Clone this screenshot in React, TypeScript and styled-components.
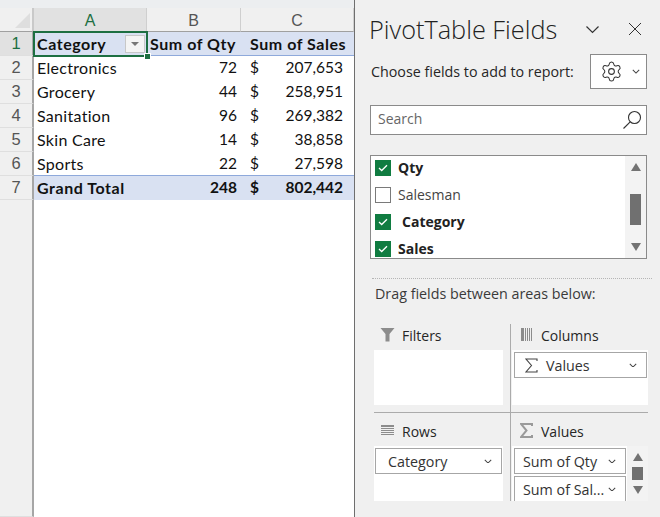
import React from "react";
import styled, { createGlobalStyle } from "styled-components";
import { Settings } from "lucide-react";

const Global = createGlobalStyle`
  html, body { margin: 0; padding: 0; background: #fff; }
  #root { width: 660px; height: 517px; overflow: hidden; }
`;

const Page = styled.div`
  display: flex;
  width: 660px;
  height: 517px;
  overflow: hidden;
  font-family: "Open Sans", "Noto Sans", sans-serif;
`;

/* ---------- sheet ---------- */
const Sheet = styled.div`
  width: 354px;
  flex: none;
  display: flex;
  flex-direction: column;
  background: #fff;
`;
const TopStrip = styled.div`
  height: 8px;
  flex: none;
  background: #eceef0;
`;
const Grid = styled.div`
  display: grid;
  grid-template-columns: 34px 113px 94px 113px;
  grid-template-rows: repeat(8, 24px) 1fr;
  flex: 1;
  min-height: 0;
  font-family: Lato, "Liberation Sans", sans-serif;
  font-size: 16px;
  color: #111;
`;
const Corner = styled.div`
  background: #f0f0f0;
  border-right: 2px solid #c9c9c9;
  border-bottom: 1px solid #a0a0a0;
  box-sizing: border-box;
  position: relative;
  &::after {
    content: "";
    position: absolute;
    right: 2px;
    bottom: 3px;
    width: 0;
    height: 0;
    border-left: 15px solid transparent;
    border-bottom: 15px solid #dedede;
  }
`;
const ColHead = styled.div<{ $active?: boolean }>`
  box-sizing: border-box;
  display: flex;
  align-items: center;
  justify-content: center;
  font-family: "Liberation Sans", sans-serif;
  font-size: 16px;
  padding-top: 3px;
  background: ${(p) => (p.$active ? "#e1e1e1" : "#f0f0f0")};
  color: ${(p) => (p.$active ? "#1d6f42" : "#555")};
  border-right: 1px solid #cfcfcf;
  border-bottom: 1px solid #a0a0a0;
`;
const RowHead = styled.div<{ $active?: boolean }>`
  box-sizing: border-box;
  display: flex;
  align-items: center;
  justify-content: center;
  font-family: "Liberation Sans", sans-serif;
  font-size: 16.5px;
  background: ${(p) => (p.$active ? "#e1e1e1" : "#f0f0f0")};
  color: ${(p) => (p.$active ? "#1d6f42" : "#555")};
  border-right: 2px solid #a6a6a6;
  border-bottom: 1px solid #dfdfdf;
`;
const Cell = styled.div<{ $band?: boolean; $right?: boolean; $bold?: boolean; $top?: boolean; $bottom?: boolean; $pad?: number }>`
  box-sizing: border-box;
  display: flex;
  align-items: center;
  white-space: nowrap;
  justify-content: ${(p) => (p.$right ? "flex-end" : "flex-start")};
  padding: 0 ${(p) => (p.$right ? 4 : 0)}px 2px ${(p) => (p.$right ? 0 : p.$pad ?? 3)}px;
  font-size: ${(p) => (p.$right ? 15.5 : 16)}px;
  font-weight: ${(p) => (p.$bold ? 700 : 400)};
  letter-spacing: ${(p) => (p.$right ? 0 : p.$bold ? 0.55 : 0.3)}px;
  background: ${(p) => (p.$band ? "#d9e1f2" : "#fff")};
  box-shadow: ${(p) => (p.$top ? "0 -1px 0 #8ea9db" : p.$bottom ? "inset 0 -1px 0 #8ea9db" : "none")};
`;
const Money = styled(Cell)`
  justify-content: space-between;
  letter-spacing: 0;
  font-size: 15.5px;
  padding: 0 11px 2px 9px;
`;
const SelectedCell = styled(Cell)`
  position: relative;
  z-index: 2;
  box-shadow: 0 0 0 1px #1d6f42, inset 0 0 0 1px #1d6f42;
  &::after {
    content: "";
    position: absolute;
    right: -4px;
    bottom: -4px;
    width: 7px;
    height: 7px;
    background: #1d6f42;
    border: 1px solid #fff;
    box-sizing: border-box;
  }
`;
const FilterBtn = styled.div`
  position: absolute;
  right: 2px;
  top: 3px;
  width: 20px;
  height: 18px;
  box-sizing: border-box;
  background: #f4f4f4;
  border: 1px solid #c8c8c8;
  display: flex;
  align-items: center;
  justify-content: center;
  &::before {
    content: "";
    border-left: 4px solid transparent;
    border-right: 4px solid transparent;
    border-top: 4px solid #777;
  }
`;
const Fill = styled.div`
  grid-column: 2 / -1;
`;

/* ---------- panel ---------- */
const Panel = styled.div`
  flex: 1;
  box-sizing: border-box;
  border-left: 1px solid #6e6e6e;
  background: #f0f0f0;
  padding: 12px 0 0 15px;
  display: flex;
  flex-direction: column;
  color: #262626;
`;
const TitleRow = styled.div`
  display: flex;
  align-items: center;
  height: 34px;
  padding-right: 18px;
`;
const Title = styled.div`
  font-size: 25.3px;
  font-weight: 300;
  color: #222;
  flex: 1;
  white-space: nowrap;
  margin-left: -1px;
`;
const HeadIcons = styled.div`
  display: flex;
  gap: 28px;
  align-items: center;
`;
const ChooseRow = styled.div`
  display: flex;
  align-items: center;
  justify-content: space-between;
  margin-top: 8px;
  padding-left: 1px;
  padding-right: 13px;
  height: 35px;
`;
const Label = styled.div`
  font-size: 14.3px;
  white-space: nowrap;
`;
const GearBtn = styled.div`
  box-sizing: border-box;
  width: 57px;
  height: 35px;
  border: 1px solid #8a8a8a;
  background: #fff;
  display: flex;
  align-items: center;
  justify-content: center;
  gap: 9px;
  padding-left: 2px;
`;
const SearchBox = styled.div`
  box-sizing: border-box;
  margin-top: 16px;
  width: 277px;
  height: 30px;
  border: 1px solid #8a8a8a;
  background: #fff;
  display: flex;
  align-items: center;
  justify-content: space-between;
  padding: 0 4px 0 7px;
  font-size: 14px;
  color: #666;
`;
const SearchText = styled.span`
  margin-bottom: 3px;
`;
const FieldBox = styled.div`
  box-sizing: border-box;
  margin-top: 20px;
  width: 277px;
  height: 104px;
  border: 1px solid #8a8a8a;
  background: #fff;
  display: flex;
  overflow: hidden;
`;
const FieldList = styled.div`
  flex: 1;
  margin-top: -2px;
  padding: 0 0 0 4px;
`;
const FieldRow = styled.div`
  height: 27px;
  display: flex;
  align-items: center;
  gap: 7px;
`;
const Check = styled.div<{ $on?: boolean }>`
  box-sizing: border-box;
  width: 16px;
  height: 16px;
  flex: none;
  background: ${(p) => (p.$on ? "#107c41" : "#fff")};
  border: 1px solid ${(p) => (p.$on ? "#107c41" : "#7a7a7a")};
  display: flex;
  align-items: center;
  justify-content: center;
`;
const FieldName = styled.span<{ $bold?: boolean; $indent?: number }>`
  font-size: 14px;
  font-weight: ${(p) => (p.$bold ? 700 : 400)};
  margin-left: ${(p) => p.$indent ?? 0}px;
  color: ${(p) => (p.$bold ? "#222" : "#444")};
`;
const Scroll = styled.div`
  width: 21px;
  flex: none;
  background: #f3f3f3;
  display: flex;
  flex-direction: column;
  align-items: center;
  padding-top: 7px;
`;
const UpArrow = styled.div`
  width: 0;
  height: 0;
  border-left: 5.5px solid transparent;
  border-right: 5.5px solid transparent;
  border-bottom: 8px solid #737373;
`;
const DownArrow = styled(UpArrow)`
  border-bottom: none;
  border-top: 8px solid #737373;
`;
const Thumb = styled.div<{ $h: number; $gapTop?: number; $gapBottom?: number }>`
  width: 11px;
  height: ${(p) => p.$h}px;
  background: #707070;
  margin: ${(p) => p.$gapTop ?? 0}px 0 ${(p) => p.$gapBottom ?? 0}px;
`;
const Dotted = styled.div`
  margin: 19px 8px 0 2px;
  border-top: 1px dotted #b5b5b5;
`;
const DragLabel = styled(Label)`
  margin: 5px 0 0 5px;
  height: 20px;
  line-height: 20px;
  color: #3a3a3a;
`;
const Areas = styled.div`
  margin: 20px 0 0 4px;
  display: grid;
  grid-template-columns: 136px 138px;
  grid-template-rows: 88px 89px;
  flex: none;
`;
const Area = styled.div<{ $right?: boolean; $bottom?: boolean }>`
  box-sizing: border-box;
  display: flex;
  flex-direction: column;
  padding-left: ${(p) => (p.$right ? 1 : 0)}px;
  padding-right: ${(p) => (p.$right ? 0 : 7)}px;
  border-left: ${(p) => (p.$right ? "1px solid #ababab" : "none")};
  border-top: ${(p) => (p.$bottom ? "1px solid #ababab" : "none")};
  padding-top: ${(p) => (p.$bottom ? 7 : 0)}px;
`;
const AreaHead = styled.div<{ $right?: boolean }>`
  height: 26px;
  flex: none;
  box-sizing: border-box;
  display: flex;
  align-items: center;
  gap: 7px;
  padding: 0 0 3px ${(p) => (p.$right ? 6 : 5)}px;
  font-size: 14px;
`;
const AreaIcon = styled.div`
  width: 16px;
  height: 16px;
  flex: none;
  display: flex;
  align-items: center;
  justify-content: center;
  margin-bottom: 3px;
`;
const Drop = styled.div`
  background: #fff;
  height: 55px;
  flex: none;
  overflow: hidden;
  display: flex;
`;
const DropList = styled.div<{ $right?: boolean }>`
  flex: 1;
  min-width: 0;
  display: flex;
  flex-direction: column;
  gap: 2px;
  padding: 2px 1px 0 ${(p) => (p.$right ? 2 : 1)}px;
`;
const Pill = styled.div<{ $inset?: number }>`
  box-sizing: border-box;
  height: 26px;
  flex: none;
  border: 1px solid #a6a6a6;
  background: #fff;
  display: flex;
  align-items: center;
  justify-content: space-between;
  padding: 0 9px 0 ${(p) => p.$inset ?? 8}px;
  font-size: 14.3px;
  white-space: nowrap;
  color: #333;
`;
const PillLead = styled.span`
  display: flex;
  align-items: center;
  gap: 8px;
  margin-left: 2px;
`;
const ValuesScroll = styled.div`
  width: 21px;
  flex: none;
  background: #f3f3f3;
  display: flex;
  flex-direction: column;
  align-items: center;
  padding-top: 7px;
  gap: 6px;
`;

const Chevron = ({ size = 8, w = 1.3, color = "#444" }: { size?: number; w?: number; color?: string }) => (
  <svg width={size} height={size * 0.6} viewBox="0 0 10 6" fill="none">
    <path d="M1 1l4 4 4-4" stroke={color} strokeWidth={w} />
  </svg>
);
const Tick = () => (
  <svg width="10" height="8" viewBox="0 0 10 8" fill="none">
    <path d="M1 4l2.7 2.5L9 1.2" stroke="#fff" strokeWidth="1.3" />
  </svg>
);
const Sigma = ({ color = "#444", w = 1.1 }: { color?: string; w?: number }) => (
  <svg width="13" height="15" viewBox="0 0 13 15" fill="none">
    <path d="M12 3V1H1l5.5 6.5L1 14h11v-2" stroke={color} strokeWidth={w} />
  </svg>
);

const rows = [
  ["Electronics", "72", "207,653"],
  ["Grocery", "44", "258,951"],
  ["Sanitation", "96", "269,382"],
  ["Skin Care", "14", "38,858"],
  ["Sports", "22", "27,598"],
];

export default function App() {
  return (
    <Page>
      <Global />
      <Sheet>
        <TopStrip />
        <Grid>
          <Corner />
          <ColHead $active>A</ColHead>
          <ColHead>B</ColHead>
          <ColHead>C</ColHead>

          <RowHead $active>1</RowHead>
          <SelectedCell $band $bold $bottom>
            Category
            <FilterBtn />
          </SelectedCell>
          <Cell $band $bold $bottom $pad={3}>Sum of Qty</Cell>
          <Cell $band $bold $bottom $pad={9}>Sum of Sales</Cell>

          {rows.map(([name, qty, sales], i) => (
            <React.Fragment key={name}>
              <RowHead>{i + 2}</RowHead>
              <Cell>{name}</Cell>
              <Cell $right>{qty}</Cell>
              <Money>
                <span>$</span>
                <span>{sales}</span>
              </Money>
            </React.Fragment>
          ))}

          <RowHead>7</RowHead>
          <Cell $band $bold $top>Grand Total</Cell>
          <Cell $band $bold $top $right>248</Cell>
          <Money $band $bold $top>
            <span>$</span>
            <span>802,442</span>
          </Money>

          <RowHead />
          <Fill />
        </Grid>
      </Sheet>

      <Panel>
        <TitleRow>
          <Title>PivotTable Fields</Title>
          <HeadIcons>
            <Chevron size={15} w={0.8} color="#333" />
            <svg width="14" height="14" viewBox="0 0 14 14" fill="none">
              <path d="M1 1l12 12M13 1L1 13" stroke="#333" strokeWidth="1" />
            </svg>
          </HeadIcons>
        </TitleRow>
        <ChooseRow>
          <Label>Choose fields to add to report:</Label>
          <GearBtn>
            <Settings size={23} strokeWidth={1.1} color="#333" />
            <Chevron size={8} />
          </GearBtn>
        </ChooseRow>
        <SearchBox>
          <SearchText>Search</SearchText>
          <svg width="20" height="20" viewBox="0 0 20 20" fill="none" stroke="#333" strokeWidth="1.1">
            <circle cx="12.5" cy="7.5" r="6" />
            <path d="M8.2 11.8L1.5 18.5" />
          </svg>
        </SearchBox>
        <FieldBox>
          <FieldList>
            <FieldRow>
              <Check $on><Tick /></Check>
              <FieldName $bold>Qty</FieldName>
            </FieldRow>
            <FieldRow>
              <Check />
              <FieldName>Salesman</FieldName>
            </FieldRow>
            <FieldRow>
              <Check $on><Tick /></Check>
              <FieldName $bold $indent={4}>Category</FieldName>
            </FieldRow>
            <FieldRow>
              <Check $on><Tick /></Check>
              <FieldName $bold>Sales</FieldName>
            </FieldRow>
          </FieldList>
          <Scroll>
            <UpArrow />
            <Thumb $h={31} $gapTop={23} $gapBottom={18} />
            <DownArrow />
          </Scroll>
        </FieldBox>
        <Dotted />
        <DragLabel>Drag fields between areas below:</DragLabel>
        <Areas>
          <Area>
            <AreaHead>
              <AreaIcon>
                <svg width="15" height="15" viewBox="0 0 15 15">
                  <path d="M0.5 1h14L9.5 7v7.5h-4V7z" fill="#8c8c8c" />
                </svg>
              </AreaIcon>
              Filters
            </AreaHead>
            <Drop />
          </Area>
          <Area $right>
            <AreaHead $right>
              <AreaIcon>
                <svg width="11" height="13" viewBox="0 0 11 13">
                  <path d="M0 0h3v13H0zM4 0h1v13H4zM6 0h1v13H6zM8 0h1v13H8zM10 0h1v13h-1z" fill="#8c8c8c" />
                </svg>
              </AreaIcon>
              Columns
            </AreaHead>
            <Drop>
              <DropList $right>
                <Pill>
                  <PillLead>
                    <Sigma />
                    Values
                  </PillLead>
                  <Chevron />
                </Pill>
              </DropList>
            </Drop>
          </Area>
          <Area $bottom>
            <AreaHead>
              <AreaIcon>
                <svg width="13" height="10" viewBox="0 0 13 10">
                  <path d="M0 0h13v2H0zM0 3h13v1H0zM0 5h13v1H0zM0 7h13v1H0zM0 9h13v1H0z" fill="#8c8c8c" />
                </svg>
              </AreaIcon>
              Rows
            </AreaHead>
            <Drop>
              <DropList>
                <Pill $inset={12}>
                  Category
                  <Chevron />
                </Pill>
              </DropList>
            </Drop>
          </Area>
          <Area $right $bottom>
            <AreaHead $right>
              <AreaIcon>
                <Sigma color="#9a9a9a" w={2} />
              </AreaIcon>
              Values
            </AreaHead>
            <Drop>
              <DropList $right>
                <Pill>
                  Sum of Qty
                  <Chevron />
                </Pill>
                <Pill>
                  Sum of Sal...
                  <Chevron />
                </Pill>
              </DropList>
              <ValuesScroll>
                <UpArrow />
                <Thumb $h={13} />
                <DownArrow />
              </ValuesScroll>
            </Drop>
          </Area>
        </Areas>
      </Panel>
    </Page>
  );
}
